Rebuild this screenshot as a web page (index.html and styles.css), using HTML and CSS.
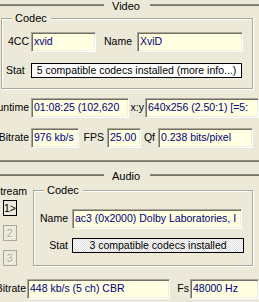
FILE: index.html
```html
<!DOCTYPE html>
<html lang="en">
<head>
<meta charset="UTF-8" />
<title>Media info</title>
<link rel="stylesheet" href="styles.css">
</head>
<body>

<div class="head">
  <span class="rule rule-left"></span>
  <span class="title">Video</span>
  <span class="rule rule-right"></span>
</div>

<fieldset class="group video-codec">
  <legend>Codec</legend>
  <div class="row row-first">
    <span class="lbl lbl-4cc">4CC</span>
    <span class="edit w-4cc">xvid</span>
    <span class="lbl lbl-name">Name</span>
    <span class="edit w-vname">XviD</span>
  </div>
  <div class="row row-stat">
    <span class="lbl lbl-stat">Stat</span>
    <span class="stat w-vstat">5 compatible codecs installed (more info...)</span>
  </div>
</fieldset>

<div class="row row-runtime">
  <span class="lbl lbl-cut w-31">Runtime</span>
  <span class="edit w-runtime">01:08:25 (102,620</span>
  <span class="lbl lbl-right w-xy">x:y</span>
  <span class="edit w-xybox">640x256 (2.50:1) [=5:</span>
</div>

<div class="row row-bitrate">
  <span class="lbl lbl-cut w-31">Bitrate</span>
  <span class="edit w-vbit">976 kb/s</span>
  <span class="lbl lbl-right w-fps">FPS</span>
  <span class="edit w-fpsbox">25.00</span>
  <span class="lbl lbl-right w-qf">Qf</span>
  <span class="edit w-qfbox">0.238 bits/pixel</span>
</div>

<div class="sep"></div>

<div class="head head-audio">
  <span class="rule rule-left"></span>
  <span class="title">Audio</span>
  <span class="rule rule-right"></span>
</div>

<div class="audio">
  <div class="streams">
    <span class="lbl lbl-cut w-stream">Stream</span>
    <span class="sbtn active">1&gt;</span>
    <span class="sbtn off">2</span>
    <span class="sbtn off">3</span>
  </div>
  <fieldset class="group audio-codec">
    <legend>Codec</legend>
    <div class="row row-aname">
      <span class="lbl lbl-right w-alabel">Name</span>
      <span class="edit w-aname">ac3 (0x2000) Dolby Laboratories, I</span>
    </div>
    <div class="row row-astat">
      <span class="lbl lbl-right w-alabel">Stat</span>
      <span class="stat dotted w-astat">3 compatible codecs installed</span>
    </div>
  </fieldset>
</div>

<div class="row row-abit">
  <span class="lbl lbl-cut w-27">Bitrate</span>
  <span class="edit w-abit">448 kb/s (5 ch) CBR</span>
  <span class="lbl lbl-right w-fs">Fs</span>
  <span class="edit w-fsbox">48000 Hz</span>
</div>

</body>
</html>
```

FILE: styles.css
```css
body {
  margin: 0;
  width: 259px;
  height: 302px;
  overflow: hidden;
  background: #ECE9D8;
  font: 10.5px/13px "Liberation Sans", Arial, sans-serif;
  color: #000;
}

/* Section headers (Video / Audio) */
.head {
  display: flex;
  align-items: flex-start;
  height: 12px;
}
.head .title {
  font-size: 11px;
  line-height: 12px;
  padding: 0 10px 0 8px;
}
.rule {
  height: 1px;
  margin-top: 4px;
  background: #8E8B7C;
  border-bottom: 1px solid #75736A;
}
.rule-left { width: 104px; }
.rule-right { flex: 1; }

.sep {
  height: 1px;
  margin-top: 12px;
  background: #8E8B7C;
  border-bottom: 1px solid #75736A;
}
.head-audio { margin-top: 8px; }

/* Group boxes */
.group {
  margin: 0;
  padding: 0;
  min-width: 0;
  border: 1px solid #ACA899;
  box-shadow: inset 1px 1px #fff, 1px 1px #fff;
}
.group legend {
  margin-left: 10px;
  padding: 0 4px 0 3px;
  font-size: 11px;
  line-height: 13px;
  background: #ECE9D8;
}
.video-codec {
  margin-left: 1px;
  width: 252px;
  box-sizing: border-box;
}

/* Rows, labels, fields */
.row {
  display: flex;
  align-items: flex-start;
}
.lbl {
  flex: none;
  padding-top: 3px;
  white-space: nowrap;
}
.lbl-right {
  display: flex;
  justify-content: flex-end;
  padding-right: 3px;
  box-sizing: border-box;
}
.lbl-cut {
  display: flex;
  justify-content: flex-end;
  overflow: hidden;
  padding-right: 2px;
  box-sizing: border-box;
}
.edit {
  flex: none;
  box-sizing: border-box;
  height: 20px;
  padding: 2px 0 0 2px;
  border: 1px solid;
  border-color: #ACA899 #fff #fff #ACA899;
  box-shadow: inset 1px 1px #716F64, inset -1px -1px #F1EFE2;
  background: #FFFFE1;
  color: #000080;
  white-space: nowrap;
  overflow: hidden;
}
.stat {
  flex: none;
  box-sizing: border-box;
  height: 15px;
  border: 1px solid #000;
  background: #fff;
  text-align: center;
  white-space: nowrap;
  overflow: hidden;
}
.stat.dotted {
  background: repeating-conic-gradient(#fff 0 25%, #DCDCDC 0 50%) 0 0 / 2px 2px;
}

/* Video codec box */
.row-first { margin-top: 7px; }
.row-stat { margin-top: 11px; margin-bottom: 10px; }
.lbl-4cc { width: 29px; padding-left: 6px; box-sizing: border-box; }
.lbl-stat { width: 29px; padding-left: 4px; box-sizing: border-box; padding-top: 1px; }
.w-4cc { width: 65px; }
.lbl-name { width: 41px; display: flex; justify-content: flex-end; padding-right: 5px; box-sizing: border-box; }
.w-vname { width: 106px; }
.w-vstat { width: 211px; }

/* Runtime / bitrate */
.row-runtime { margin-top: 9px; }
.row-bitrate { margin-top: 10px; }
.w-31 { width: 31px; }
.w-runtime { width: 98px; }
.w-xy { width: 16px; padding-right: 1px; }
.w-xybox { width: 114px; }
.w-vbit { width: 48px; }
.w-fps { width: 28px; }
.w-fpsbox { width: 34px; }
.w-qf { width: 17px; }
.w-qfbox { width: 95px; }

/* Audio */
.audio {
  display: flex;
  margin-top: 2px;
}
.streams {
  width: 33px;
  flex: none;
  display: flex;
  flex-direction: column;
  align-items: flex-start;
}
.w-stream { width: 29px; padding-top: 1px; }
.sbtn {
  box-sizing: border-box;
  width: 14px;
  height: 16px;
  margin-left: 3px;
  margin-top: 9px;
  text-align: center;
  line-height: 14px;
  border: 1px solid #000;
}
.sbtn.active { margin-top: 2px; }
.sbtn.off {
  border-color: #ACA899;
  color: #ACA899;
  text-shadow: 1px 1px #fff;
}
.audio-codec {
  width: 220px;
  box-sizing: border-box;
}
.row-aname { margin-top: 12px; }
.row-astat { margin-top: 9px; margin-bottom: 10px; }
.w-alabel { width: 38px; padding-right: 4px; }
.row-astat .w-alabel { padding-top: 1px; }
.w-aname { width: 170px; }
.w-astat { width: 172px; }

.row-abit { margin-top: 13px; }
.w-27 { width: 27px; padding-right: 1px; }
.w-abit { width: 143px; }
.w-fs { width: 20px; padding-right: 1px; }
.w-fsbox { width: 69px; }
```
